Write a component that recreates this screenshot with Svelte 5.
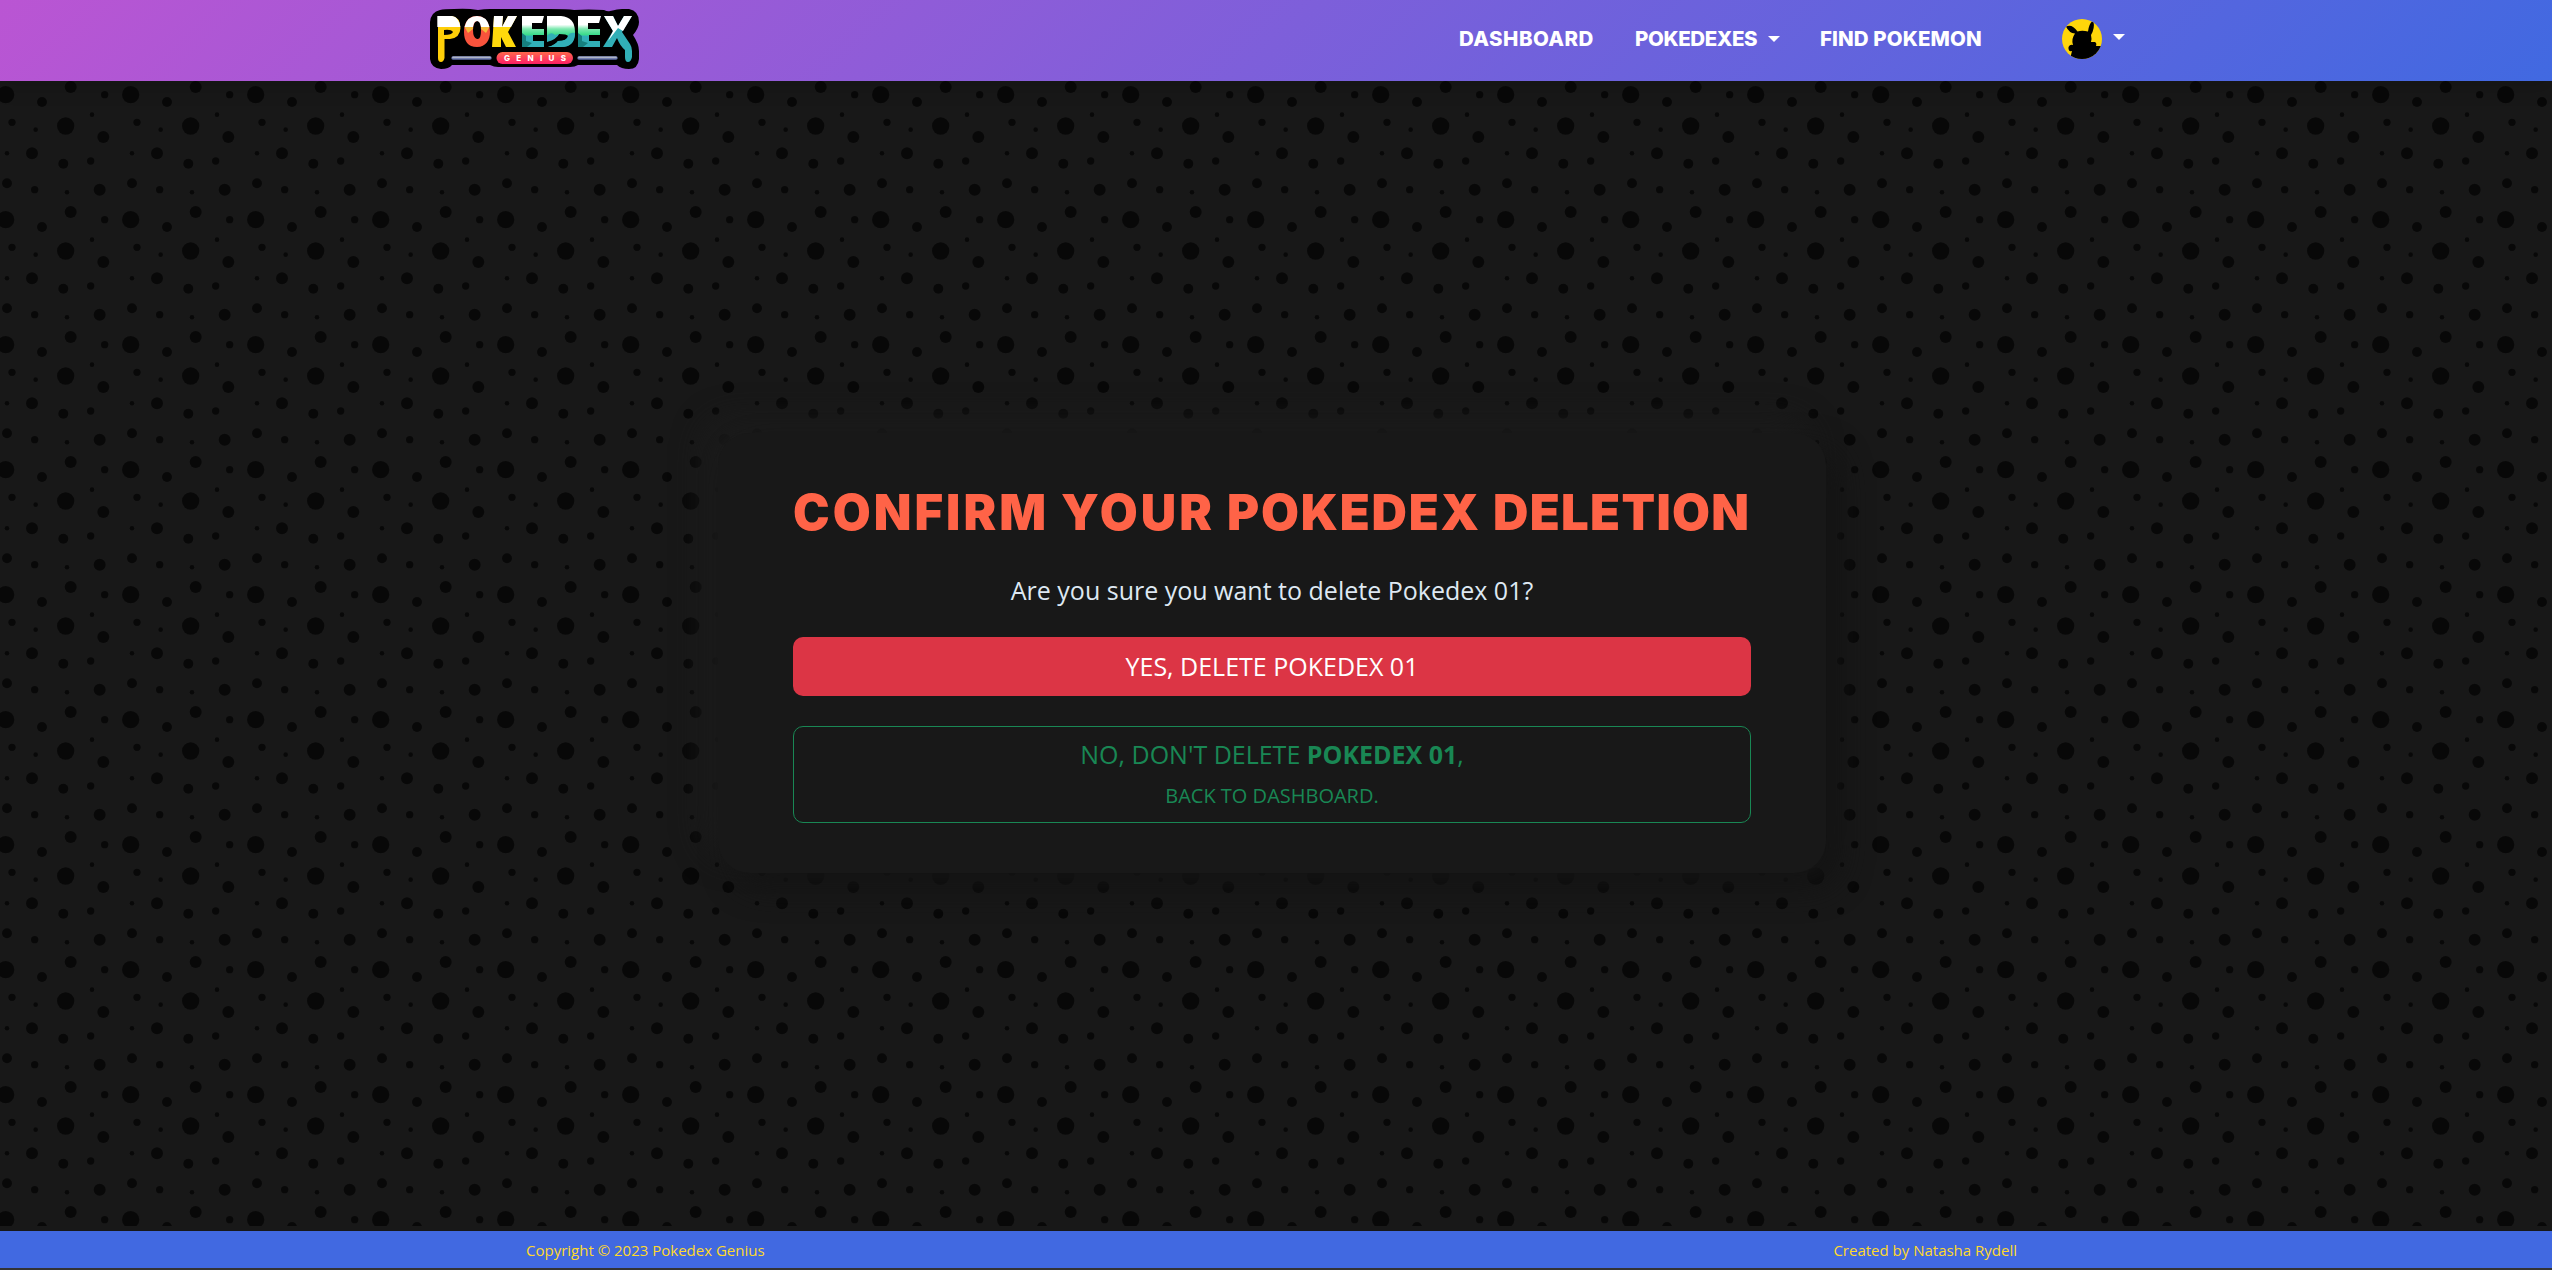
<script>
  const tile = 125;
  // Dot centres are relative to the tile's origin: x, y, radius
  const dots = [
    [5.67, 13.67, 8.67], [130.67, 13.67, 8.67], [70.67, 6, 6], [104.67, 13.67, 3.67],
    [42, 21, 5], [12, 41.3, 3.67], [35.67, 48.67, 2.3], [65.67, 45, 8.67],
    [92, 33.67, 2.3], [103.3, 56, 6], [7, 72.3, 2.3], [32, 72.3, 6],
    [63.3, 82.67, 5], [90.67, 80, 3.67], [7, 102.3, 5], [34.67, 108.67, 3.67],
    [67, 111.3, 2.3], [99.67, 108.67, 6]
  ];
  // Each heading word with its start and width
  const words = [
    ['CONFIRM', 0, 253], ['YOUR', 268, 151], ['POKEDEX', 434, 252], ['DELETION', 700, 256]
  ];
</script>

<div class="page">
  <header>
    <svg class="logo" viewBox="0 0 210 64" role="img" aria-label="Pokedex Genius">
      <defs>
        <linearGradient id="letters" gradientUnits="userSpaceOnUse" x1="0" y1="8" x2="0" y2="39">
          <stop offset="0" stop-color="#fff" /><stop offset=".28" stop-color="#fff" /><stop offset=".42" stop-color="#7be8ae" /><stop offset=".6" stop-color="#3bdc8c" /><stop offset=".66" stop-color="#31afb7" /><stop offset="1" stop-color="#31afb7" />
        </linearGradient>
        <linearGradient id="pill" x1="0" y1="0" x2="0" y2="1"><stop offset="0" stop-color="#ff684c" /><stop offset="1" stop-color="#fb1e64" /></linearGradient>
      </defs>
      <path d="M10 2Q14 1 24 1Q37 0 48 2Q54 1 60 1Q90 1 120 1Q138 1 144 2Q158 1 174 2Q178 4 180 3Q188 1 192 1H199Q209 3 209 14Q209 20 203 27Q209 36 209 43V51Q208 61 199 61Q191 61 187 57H148Q145 59 140 59H68Q64 59 60 57H22Q19 61 11 61Q1 60 0 51V14Q1 4 10 2Z" fill="#000" />
      <path d="M8 8H22Q30 9 30.500 20Q30 30 20 31H14.500V50Q13.500 54 11 54Q8 54 8 50V10ZM14 22V27Q22 27 23 24Q21 21 14 22Z" fill="#ffcf08" fill-rule="evenodd" />
      <path d="M7.300 8H22Q29 9 30.300 19H7.300V10Z" fill="#fff" />
      <path d="M47 8C56 8 60 16 60 24S56 39 47 39S34 33 34 24S38 8 47 8ZM47 13Q43 14 43 22T47 31T51 22T47 13Z" fill="#f9533c" fill-rule="evenodd" />
      <path d="M47 8Q57 8 59.500 19H51Q50 13 47 13T43 19H34.500Q37 8 47 8Z" fill="#fff" />
      <path d="M34.500 19H43V21L38 25ZM51 19H59.500L56 25L51 21Z" fill="#f4b83a" />
      <path d="M64 8H73L72 19L78 8H87L78 24L86 39H76L71 29V39H62Z" fill="#ffd90c" />
      <path d="M64 8H73L72 19L78 8H87L81 19H63.300Z" fill="#fff" />
      <path d="M92 8H114L112 15H102V21H114V27H103V33H114V39H92Z" fill="url(#letters)" />
      <path d="M92 25L96 28V33L102 35L97 39H92Z" fill="#16807f" />
      <path d="M117 8H131Q145 9 145 24T131 39H118Q125 37 128 33Q138 33 138 28Q137 26 129 26Q126 31 117 32Z" fill="url(#letters)" />
      <path d="M118 39H131Q145 39 145 25Q140 24 138 28Q137 33 128 33Q125 37 118 39ZM117 28Q121 23 125 27L129 26Q127 31 117 34Z" fill="#31afb7" />
      <path d="M148 8H171L169 15H158V21H170V27H159V33H170V39H148Z" fill="url(#letters)" />
      <path d="M148 25L152 28V33L158 35L153 39H148Z" fill="#16807f" />
      <path d="M174 8H183L188 18L194 8H202L192 24L200 36Q202 39 202 43V49Q201 54 198 54Q195 54 195 49V42Q190 38 187 30L182 39H173L183 23Z" fill="#31afb7" />
      <path d="M174 8H183L188 18L194 8H202L193 23L188 20L178 33L183 23Z" fill="#fff" />
      <g stroke-width="3.400" stroke-linecap="round"><path d="M23 50H60M149 50H186" stroke="#606eaa" /><path d="M23 49.400H60M149 49.400H186" stroke="#aeb4c5" stroke-width="1.800" /></g>
      <rect x="66.500" y="44" width="76.500" height="12" rx="6" fill="url(#pill)" />
      <text x="74" y="53" textLength="62" lengthAdjust="spacing">GENIUS</text>
    </svg>
    <nav>
      <a class="dashboard" href="#dashboard">DASHBOARD</a>
      <a class="pokedexes" href="#pokedexes"><span>POKEDEXES</span><i class="caret"></i></a>
      <a class="find" href="#find">FIND POKEMON</a>
      <a class="profile" href="#profile" aria-label="Profile">
        <svg viewBox="0 0 40 40">
          <clipPath id="round"><circle cx="20" cy="20" r="20" /></clipPath>
          <g clip-path="url(#round)">
            <path fill="#ffd60a" d="M0 0H40V40H0Z" />
            <path d="M4 7.500Q10 4.500 15.500 12.500Q20 11 26 12.500Q27 5 30 2.500L31.500 3Q33 9 29 16Q30 20 29 23H33Q35 24 34 27H40V40H9V36L10 32Q6 33 6.500 28Q8 25 11 26Q9 20 13 14.500Q7 14 4 7.500Z" />
          </g>
        </svg>
        <i class="caret"></i>
      </a>
    </nav>
  </header>

  <main>
    <svg class="dots" aria-hidden="true">
      <defs>
        <pattern id="speckle" width={tile} height={tile} patternUnits="userSpaceOnUse">
          {#each dots as [x, y, r]}<circle cx={x} cy={y} {r} fill="#080808" />{/each}
        </pattern>
      </defs>
      <rect width="100%" height="100%" fill="url(#speckle)" />
    </svg>
    <section class="card">
      <svg class="title" viewBox="0 0 958 62" role="img" aria-label="Confirm your Pokedex deletion">
        {#each words as [word, x, width]}<text {x} y="46" textLength={width} lengthAdjust="spacing">{word}</text>{/each}
      </svg>
      <p>Are you sure you want to delete Pokedex 01?</p>
      <button class="yes">YES, DELETE POKEDEX 01</button>
      <button class="no"><span>NO, DON'T DELETE <b>POKEDEX 01</b>,</span><small>BACK TO DASHBOARD.</small></button>
    </section>
  </main>

  <footer><span>Copyright © 2023 Pokedex Genius</span><span>Created by Natasha Rydell</span></footer>
</div>

<style>
  :global(body) { margin: 0; background: #181818; }
  .page { width: 100%; height: 100vh; display: flex; flex-direction: column; overflow: hidden; background: #181818; font-family: "Open Sans", sans-serif; box-sizing: border-box; border-bottom: 2px solid #333; }
  * { box-sizing: border-box; }
  header { height: 81px; flex: none; display: flex; justify-content: space-between; align-items: flex-start; padding: 8px 427px 0 430px; background: linear-gradient(135deg, #ba55d3, #4169e1); box-shadow: 0 4px 20px #00000030; z-index: 1; }
  .logo { width: 210px; height: 64px; }
  .logo text { font: 800 8px Inter, sans-serif; fill: #fff; }
  nav { display: flex; height: 62px; align-items: center; }
  nav a { display: flex; align-items: center; color: #fff; text-decoration: none; font: 800 20.500px/30px Inter, sans-serif; white-space: nowrap; }
  .dashboard { width: 176px; letter-spacing: .45px; }
  .pokedexes { width: 185px; letter-spacing: -.4px; }
  .find { width: 242px; letter-spacing: .1px; }
  .profile svg { width: 40px; height: 40px; }
  .caret { margin-left: 11px; border: 6px solid transparent; border-top-color: #fff; border-bottom: 0; }
  .profile .caret { margin-bottom: 4px; }
  main { height: 1145px; flex: none; display: grid; }
  .dots { grid-area: 1 / 1; width: 100%; height: 100%; }
  .card { grid-area: 1 / 1; justify-self: center; margin: 352px 8px 0 0; width: 1108px; height: 440px; padding: 51px 75px 48px; border-radius: 32px; background: #181818; box-shadow: 15px 15px 30px #141414, -15px -15px 30px #1c1c1c; display: flex; flex-direction: column; position: relative; }
  .title { width: 958px; height: 62px; flex: none; }
  .title text { font: 900 49px Inter, sans-serif; fill: #ff6347; }
  p { flex: none; margin: 26px 0 0; height: 65px; font-size: 25px; line-height: 36px; text-align: center; color: #dee8f2; }
  button { font-family: inherit; border-radius: 10px; width: 958px; font-size: 25px; flex: none; padding: 0; }
  .yes { height: 59px; padding-bottom: 2px; border: 0; background: #dc3545; color: #fff; }
  .no { height: 97px; margin-top: 30px; background: transparent; border: 1px solid #198754; color: #198754; display: flex; flex-direction: column; align-items: center; justify-content: center; line-height: 41px; }
  small { font-size: 20px; line-height: 41px; }
  footer { height: 37px; flex: none; margin-top: 5px; padding: 0 535px 0 526px; background: #4169e1; color: #ffd92b; display: flex; justify-content: space-between; align-items: center; font-size: 15px; }
</style>
